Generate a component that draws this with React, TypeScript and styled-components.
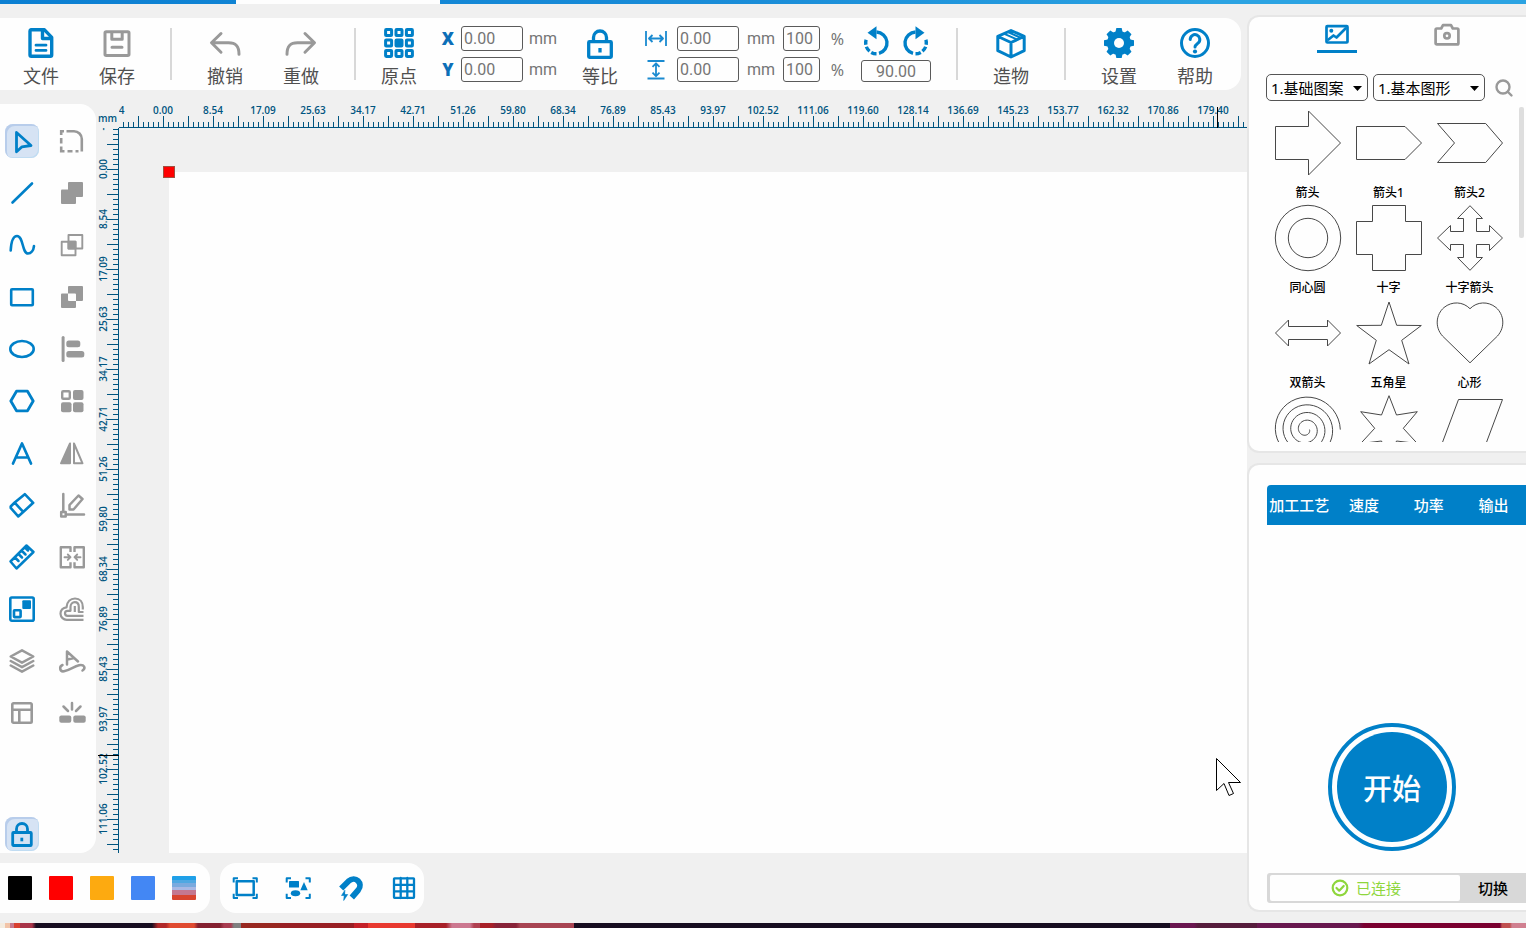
import React, { useEffect, useState } from "react";
import styled, { createGlobalStyle } from "styled-components";

const blue = "#0080c8";
const gray = "#999999";
const rulerBlue = "#005580";
const cjk = `"Noto Sans", "Noto Sans CJK SC", sans-serif`;
const numeric = `Roboto, "Noto Sans CJK SC", sans-serif`;

const GlobalStyle = createGlobalStyle`
  *, *::before, *::after { box-sizing: border-box; }
  body { margin: 0; background: #f0f0f0; font-family: ${cjk}; }
  button, input, select { font-family: inherit; margin: 0; }
  button { border: 0; padding: 0; background: none; cursor: pointer; }
  svg { display: block; flex: none; }
`;

/* ---------- page frame ---------- */

const Page = styled.div`
  display: flex;
  flex-direction: column;
  height: 100vh;
  min-height: 760px;
  overflow: hidden;
  background: #f0f0f0;
`;

const TitleStrip = styled.div`
  flex: none;
  height: 4px;
  background:
    linear-gradient(#fefefe, #fefefe) 236px 0 / 204px 4px no-repeat,
    linear-gradient(90deg, #0b7fd2, #1a8dd8 50%, #2ba3e2 80%);
`;

const DesktopStrip = styled.div`
  flex: none;
  height: 5px;
  background: linear-gradient(
    90deg,
    #f4ece0 0 5px, #f2c4a8 5px 10px, #c8788c 10px 14px, #d84030 14px 20px, #a83448 20px 32px,
    #170d20 36px 152px, #b02828 158px 166px, #e04a30 170px 194px, #842030 198px 220px,
    #a83c50 224px 231px, #808080 234px 241px, #982820 241px 280px, #981f24 280px 354px,
    #c42028 354px 368px, #e8382f 368px 415px, #a82028 415px 446px, #cc7890 452px 470px,
    #b04050 474px 480px, #a82028 480px 492px, #882338 496px 516px, #a84452 520px 574px,
    #170d20 574px 1170px, #6a1650 1170px 1194px, #561c3c 1198px 1257px, #68184f 1257px 1358px,
    #7a0030 1364px 1500px, #c05050 1502px 1510px, #d08090 1512px
  );
`;

const Main = styled.main`
  display: flex;
  flex: 1;
  min-height: 0;
`;

const LeftColumn = styled.div`
  display: flex;
  flex-direction: column;
  flex: 1;
  min-width: 0;
  padding: 14px 0 10px;
`;

const RightColumn = styled.aside`
  display: flex;
  flex-direction: column;
  flex: none;
  gap: 10px;
  width: 279px;
  padding: 11px 0;
`;

/* ---------- top toolbar ---------- */

const Toolbar = styled.header`
  display: flex;
  flex: none;
  align-items: flex-start;
  height: 72px;
  margin-right: 6px;
  padding: 0 8px 0 3px;
  background: #fefefe;
  border-radius: 0 16px 16px 0;
`;

const ToolButton = styled.button<{ $narrow?: boolean }>`
  display: flex;
  flex: none;
  flex-direction: column;
  align-items: center;
  gap: 4px;
  width: ${(p) => (p.$narrow ? 56 : 76)}px;
  padding-top: 9px;
  color: #505050;
  font-size: 18px;
  line-height: 26px;
`;

const Divider = styled.div`
  flex: none;
  width: 2px;
  height: 52px;
  margin: 10px 15px;
  background: #d8d8d8;
`;

const TransformGroup = styled.div`
  display: flex;
  flex: none;
  gap: 14px;
  margin-right: 10px;
`;

const PositionGrid = styled.div`
  display: grid;
  grid-template-columns: 14px 62px 29px;
  gap: 6px;
  align-items: center;
  align-self: flex-start;
  margin-top: 8px;
`;

const SizeGrid = styled(PositionGrid)`
  grid-template-columns: 27px 62px 28px 37px 19px;
  column-gap: 8px;
`;

const AxisLabel = styled.label`
  color: #0d6fb8;
  font-family: "Open Sans", sans-serif;
  font-size: 17px;
  font-weight: 800;
  line-height: 24px;
  text-align: center;
`;

const IconLabel = styled.label`
  display: flex;
  justify-content: center;
`;

const Unit = styled.span`
  color: #757575;
  font-family: ${numeric};
  font-size: 16px;
  line-height: 24px;
`;

const Percent = styled(Unit)`
  font-family: ${cjk};
  text-align: center;
`;

const NumberBox = styled.input<{ $center?: boolean }>`
  width: 100%;
  height: ${(p) => (p.$center ? 22 : 25)}px;
  padding: 0 2px;
  border: 1px solid #5a5a5a;
  border-radius: 3px;
  background: #fefefe;
  color: #757575;
  font-family: ${numeric};
  font-size: 16px;
  text-align: ${(p) => (p.$center ? "center" : "left")};
`;

const RotateBlock = styled.div`
  display: grid;
  grid-template-columns: 32px 32px;
  align-self: flex-start;
  justify-content: space-between;
  row-gap: 2px;
  width: 70px;
  margin-top: 8px;
`;

const RotateField = styled.label`
  display: flex;
  grid-column: 1 / -1;
`;

/* ---------- left tool palette ---------- */

const Workspace = styled.div`
  display: flex;
  flex: 1;
  min-height: 0;
  margin: 14px 0 10px;
`;

const Sidebar = styled.nav`
  display: flex;
  flex: none;
  flex-direction: column;
  justify-content: space-between;
  width: 96px;
  padding: 20px 5px 2px;
  background: #fefefe;
  border-radius: 0 16px 16px 0;
`;

const ToolGrid = styled.div`
  display: grid;
  grid-template-columns: 34px 34px;
  gap: 18px 16px;
`;

const SideButton = styled.button<{ $active?: boolean }>`
  width: 34px;
  height: 34px;
  border-radius: 8px;
  background: ${(p) => (p.$active ? "#d6e3f4" : "none")};
  box-shadow: ${(p) =>
    p.$active ? "inset 2px 2px 0 #b8cdeb, inset -1px -1px 0 #c0dcf2" : "none"};
`;

/* ---------- canvas ---------- */

const Board = styled.section`
  display: grid;
  flex: 1;
  grid-template-columns: 23px minmax(0, 1fr);
  grid-template-rows: 24px minmax(0, 1fr);
  min-width: 0;
`;

const RulerUnit = styled.span`
  padding: 6px 0 0 2px;
  color: ${rulerBlue};
  font-family: "Open Sans", sans-serif;
  font-size: 10px;
  font-weight: 600;
  line-height: 16px;
`;

const RulerSvg = styled.svg`
  width: 100%;
  height: 100%;
  overflow: hidden;
  text {
    fill: ${rulerBlue};
    font-family: "Open Sans", sans-serif;
    font-size: 10px;
    font-weight: 600;
    text-anchor: middle;
  }
`;

const Canvas = styled.div`
  position: relative;
  overflow: hidden;
  padding: 44px 0 0 50px;
`;

const Sheet = styled.div`
  height: 100%;
  background: #fefefe;
`;

const OriginMark = styled.div`
  position: absolute;
  left: 44px;
  top: 38px;
  width: 12px;
  height: 12px;
  border: 1px solid #a05040;
  background: #ff0000;
`;

const Pointer = styled.svg`
  position: absolute;
  left: 1096px;
  top: 629px;
`;

/* ---------- bottom bars ---------- */

const BottomBars = styled.footer`
  display: flex;
  flex: none;
  gap: 10px;
  height: 50px;
`;

const Swatches = styled.div`
  display: flex;
  align-items: center;
  gap: 17px;
  padding: 0 14px 0 8px;
  background: #fefefe;
  border-radius: 0 16px 16px 0;
`;

const Swatch = styled.button<{ $fill: string }>`
  width: 24px;
  height: 24px;
  border-radius: 1px;
  background: ${(p) => p.$fill};
`;

const ViewTools = styled.div`
  display: flex;
  align-items: center;
  gap: 25px;
  padding: 0 6px 0 11px;
  background: #fefefe;
  border-radius: 16px;
`;

/* ---------- right panels ---------- */

const Panel = styled.section<{ $grow?: boolean }>`
  display: flex;
  flex: ${(p) => (p.$grow ? "1" : "none")};
  flex-direction: column;
  min-height: 0;
  border: 2px solid #e6e6e6;
  border-right: 0;
  border-radius: 12px 0 0 12px;
  background: #fefefe;
  padding-left: 18px;
`;

const Tabs = styled.div`
  display: flex;
  padding-left: 15px;
`;

const Tab = styled.button<{ $active?: boolean }>`
  display: flex;
  flex-direction: column;
  align-items: center;
  width: 110px;
  height: 36px;
  padding-top: 3px;
  &::after {
    content: "";
    width: 40px;
    height: 3px;
    margin-top: 2px;
    background: ${(p) => (p.$active ? blue : "transparent")};
  }
`;

const Filters = styled.div`
  display: flex;
  align-items: center;
  gap: 5px;
  margin: 21px 0 6px -1px;
`;

const SelectWrap = styled.div<{ $wide?: boolean }>`
  display: flex;
  position: relative;
  width: ${(p) => (p.$wide ? 112 : 102)}px;
  svg {
    position: absolute;
    right: 6px;
    top: 12px;
    pointer-events: none;
  }
`;

const Select = styled.select`
  width: 100%;
  height: 27px;
  padding: 0 18px 0 4px;
  border: 1px solid #555;
  border-radius: 5px;
  appearance: none;
  background: #fefefe;
  color: #000;
  font-size: 15px;
  line-height: 24px;
`;

const SearchButton = styled.button`
  margin-left: 4px;
`;

const ShapeScroller = styled.div`
  display: flex;
  align-items: flex-start;
  justify-content: space-between;
  height: 335px;
  margin-bottom: 9px;
  padding-right: 2px;
  overflow: hidden;
`;

const ShapeGrid = styled.div`
  display: grid;
  grid-template-columns: repeat(3, 81px);
`;

const ShapeCell = styled.button`
  display: flex;
  flex-direction: column;
  align-items: center;
  gap: 7px;
  height: 95px;
  padding-top: 2px;
  color: #000;
  font-size: 12px;
  font-weight: 500;
  line-height: 18px;
`;

const ScrollThumb = styled.div`
  width: 5px;
  height: 131px;
  border-radius: 2px;
  background: #dedede;
`;

const ParamTable = styled.table`
  width: 100%;
  margin-top: 20px;
  border-collapse: collapse;
  table-layout: fixed;
  th {
    height: 40px;
    padding: 0;
    background: ${blue};
    color: #fefefe;
    font-size: 15px;
    font-weight: 500;
    line-height: 24px;
    white-space: nowrap;
  }
  th:first-child {
    border-top-left-radius: 4px;
  }
`;

const StartArea = styled.div`
  display: flex;
  flex: 1;
  align-items: flex-end;
  justify-content: center;
  padding: 0 9px 22px 0;
`;

const StartButton = styled.button`
  width: 128px;
  height: 128px;
  padding: 5px;
  border: 4px solid ${blue};
  border-radius: 50%;
  background: ${blue} content-box;
  color: #fefefe;
  font-size: 29px;
  font-weight: 500;
`;

const StatusBar = styled.div`
  display: flex;
  flex: none;
  height: 30px;
  margin-bottom: 7px;
  padding: 2px 0 2px 3px;
  border-radius: 3px 0 0 3px;
  background: #d8d8d8;
`;

const Status = styled.div`
  display: flex;
  align-items: center;
  justify-content: center;
  gap: 7px;
  flex: none;
  width: 190px;
  padding-left: 2px;
  border-radius: 2px;
  background: #fefefe;
  color: #8ed63c;
  font-size: 15px;
  line-height: 24px;
`;

const SwitchButton = styled.button`
  flex: 1;
  color: #000;
  font-size: 15px;
  font-weight: 500;
  line-height: 24px;
`;

/* ---------- drawings ---------- */

type IconProps = { size?: number; color?: string; w?: number; children: React.ReactNode };

const Icon = ({ size = 32, color = blue, w = 3, children }: IconProps) => (
  <svg
    width={size}
    height={size}
    viewBox={`0 0 ${size} ${size}`}
    fill="none"
    stroke={color}
    strokeWidth={w}
    strokeLinecap="round"
    strokeLinejoin="round"
    aria-hidden="true"
  >
    {children}
  </svg>
);

const FileIcon = () => (
  <Icon w={3.4}>
    <path d="M6 2.8h13.5l7.2 7.6V28a1.3 1.3 0 0 1-1.3 1.3H6.3A1.3 1.3 0 0 1 5 28V4a1.2 1.2 0 0 1 1-1.2z" />
    <path d="M17.500 4v7.500h8" />
    <path d="M11 18.2h10M11 23.4h10" strokeWidth="2.8" />
  </Icon>
);

const SaveIcon = () => (
  <Icon color={gray}>
    <rect x="4" y="4.8" width="24" height="23.6" rx="1.2" />
    <path d="M10.8 5.5v6.700h10.400V5.500M11 20.200h10" />
  </Icon>
);

const UndoIcon = () => (
  <Icon color={gray}>
    <path d="M12 6.500L2.500 15.800l9.500 9.400M3 15.800h16.500c8 0 10.500 4 10.500 11.500" />
  </Icon>
);

const RedoIcon = () => (
  <Icon color={gray}>
    <path d="M20 6.500l9.500 9.300-9.500 9.400M29 15.800H12.500c-8 0-10.500 4-10.500 11.500" />
  </Icon>
);

const OriginIcon = () => (
  <Icon w={3}>
    {[0, 1, 2].map((r) =>
      [0, 1, 2].map((c) => (
        <rect
          key={`${r}${c}`}
          x={2.6 + c * 10.4}
          y={2.6 + r * 10.4}
          width="6"
          height="6"
          rx="0.6"
          fill={r === 1 && c === 1 ? blue : "none"}
        />
      ))
    )}
  </Icon>
);

const LockIcon = () => (
  <Icon w={3.3}>
    <path d="M9.500 14v-3.500a6.500 6.500 0 0 1 13 0V14" />
    <rect x="4.700" y="14.600" width="22.600" height="15.700" rx="0.800" />
    <path d="M16 21v4.500" strokeLinecap="butt" />
  </Icon>
);

const WidthIcon = () => (
  <Icon size={24} color="#1a8ad0" w={1.8}>
    <path d="M2 4v15M22 4v15M5.500 11.500h13M8.500 8l-3.500 3.500 3.500 3.500M15.500 8l3.500 3.500-3.500 3.500" strokeLinecap="butt" />
  </Icon>
);

const HeightIcon = () => (
  <Icon size={24} color="#1a8ad0" w={1.8}>
    <path d="M3.500 3h17M3.500 20.500h17M12 5.500v12.500M8.500 8.800L12 5.300l3.500 3.500M8.500 14.700l3.500 3.500 3.500-3.500" strokeLinecap="butt" />
  </Icon>
);

const RotateArt = () => (
  <>
    <path d="M15.500 6a10.900 10.900 0 0 1 2.500 21.400" strokeLinecap="butt" />
    <path d="M15.500 27.800a10.900 10.900 0 0 1-10.400-14" strokeLinecap="butt" strokeDasharray="5.500 2" />
    <path d="M6.500 6.800L15.500 .3v13z" fill={blue} stroke="none" />
  </>
);

const RotateLeftIcon = () => (
  <Icon w={3.4}>
    <RotateArt />
  </Icon>
);

const RotateRightIcon = () => (
  <Icon w={3.4}>
    <g transform="translate(32 0) scale(-1 1)">
      <RotateArt />
    </g>
  </Icon>
);

const BoxIcon = () => (
  <Icon w={3}>
    <path d="M16 3.500l13.200 5.800v14.400L16 30 2.800 23.700V9.300zM3 9.500l13 6 13-6M16 15.500V29.500" />
    <path d="M9.400 6.800l13 5.800M13 5l13 6" strokeWidth="2" />
  </Icon>
);

const GearIcon = () => (
  <Icon>
    <g fill={blue} stroke="none">
      {[0, 45, 90, 135].map((a) => (
        <path key={a} d="M12.300 6l1-5h5.400l1 5v20l-1 5h-5.400l-1-5z" transform={`rotate(${a} 16 16)`} />
      ))}
      <circle cx="16" cy="16" r="12" />
      <circle cx="16" cy="16" r="5" fill="#fefefe" />
    </g>
  </Icon>
);

const HelpIcon = () => (
  <Icon w={3}>
    <circle cx="16" cy="16" r="13.500" />
    <path d="M11.200 12.500a4.800 4.800 0 1 1 7.800 3.700c-1.800 1.400-3 2-3 3.900" />
    <circle cx="16" cy="24.500" r="2.100" fill={blue} stroke="none" />
  </Icon>
);

const sideTools: { name: string; art: React.ReactNode; color: string; w?: number; active?: boolean }[] = [
  { name: "选择", color: blue, w: 2.8, active: true, art: <path d="M11.500 8.500l14.500 13-9 1.300-5.500 5z" /> },
  {
    name: "圆角", color: gray, w: 2.6,
    art: (
      <path
        d="M11.500 7.200h7.500a7.800 7.800 0 0 1 7.800 7.800v12.500M5 7.200h4M6.200 6v5M6.200 14v5.500M6.200 22.500v6M5 27.300h4.500M12.500 27.300h5M20.500 27.300h3"
        strokeLinecap="butt"
      />
    ),
  },
  { name: "直线", color: blue, w: 2.6, art: <path d="M7.500 26.500L27 7.500" /> },
  {
    name: "合并", color: gray,
    art: (
      <g fill={gray} stroke="none">
        <rect x="13" y="6" width="15" height="15" rx="1" />
        <rect x="6" y="13.500" width="15" height="14.500" rx="1" />
      </g>
    ),
  },
  { name: "曲线", color: blue, w: 2.6, art: <path d="M5.700 22.500C6.300 12 8.500 8 12 8c6.500 0 5 17.500 11 17.500 3 0 5.500-3 6-7.500" /> },
  {
    name: "相交", color: gray, w: 1.9,
    art: (
      <>
        <rect x="13.500" y="7" width="13.800" height="13.500" />
        <rect x="6.700" y="13.700" width="13.800" height="13.500" />
        <rect x="13.500" y="13.700" width="7" height="6.800" fill={gray} />
      </>
    ),
  },
  { name: "矩形", color: blue, w: 2.6, art: <rect x="6.200" y="9.200" width="21.600" height="16" rx="0.800" /> },
  {
    name: "排除", color: gray,
    art: (
      <g stroke="none">
        <path fill={gray} fillRule="evenodd" d="M13 7a1 1 0 0 1 1-1h13a1 1 0 0 1 1 1v13a1 1 0 0 1-1 1h-6v6a1 1 0 0 1-1 1H7a1 1 0 0 1-1-1V14.500a1 1 0 0 1 1-1h6zM13 13.500V20a1 1 0 0 0 1 1h7v-6.500a1 1 0 0 0-1-1z" />
      </g>
    ),
  },
  { name: "椭圆", color: blue, w: 2.6, art: <ellipse cx="17" cy="17" rx="11.700" ry="8" /> },
  {
    name: "对齐", color: gray,
    art: (
      <g fill={gray} stroke="none">
        <rect x="6.600" y="4" width="3" height="26" rx="1.500" />
        <rect x="11.300" y="8.500" width="14" height="6.800" rx="2.500" />
        <rect x="11.300" y="19" width="18" height="6.500" rx="2.500" />
      </g>
    ),
  },
  { name: "多边形", color: blue, w: 2.8, art: <path d="M5.800 17l5.700-9.800h11l5.700 9.800-5.700 9.800h-11z" /> },
  {
    name: "阵列", color: gray,
    art: (
      <>
        <rect x="7.200" y="7.200" width="7.600" height="7.600" rx="1" strokeWidth="2.400" />
        <g fill={gray} stroke="none">
          <rect x="18" y="6" width="10.500" height="10" rx="2" />
          <rect x="6" y="18.300" width="10.500" height="10" rx="2" />
          <rect x="18" y="18.300" width="10.500" height="10" rx="2" />
        </g>
      </>
    ),
  },
  { name: "文字", color: blue, w: 2.7, art: <path d="M8 27.500L17 7.500l9 20M11.500 21.500h11" /> },
  {
    name: "镜像", color: gray, w: 2,
    art: (
      <>
        <path d="M15 7.500v19.800H6z" fill={gray} />
        <path d="M19 7.500v19.800h8.500z" />
      </>
    ),
  },
  { name: "橡皮擦", color: blue, w: 2.6, art: <path d="M19.800 6.200l8.400 8.600-10 9.200-5 4.400-7.500-8.500V18.500l4-4zM9.700 14.700l8.300 9" /> },
  {
    name: "节点编辑", color: gray, w: 2.5,
    art: (
      <>
        <path d="M8.300 6v17.500M11.500 26.500H29" />
        <rect x="6.200" y="24" width="4.500" height="4.500" />
        <path d="M14.500 21.500v-4.500L23.500 7.500l4 3.500-9 10.500z" />
      </>
    ),
  },
  {
    name: "测量", color: blue, w: 2.5,
    art: <path d="M21.500 5.500l7 6.500-17 16.500-6-7zM10 17.500l3.500 3.500M13.500 14l3.500 3.500M17 11l3.500 3.500M20.500 8l2.500 2.500" />,
  },
  {
    name: "收缩", color: gray, w: 2.4,
    art: (
      <>
        <path d="M15.500 12V7.200H5.800v20h9.700v-5M19.500 12V7.200h9.300v20h-9.300v-5" strokeLinecap="butt" />
        <path d="M9.500 17.200h5.500M12.800 14.500l2.700 2.700-2.700 2.700M25.500 17.200H20M22.200 14.500l-2.700 2.700 2.700 2.700" strokeWidth="1.900" />
      </>
    ),
  },
  {
    name: "排版", color: blue, w: 2.6,
    art: (
      <>
        <rect x="5.300" y="5.500" width="23.400" height="23.200" rx="1.500" />
        <rect x="17.300" y="8.300" width="8.700" height="8.700" rx="1" fill={blue} stroke="none" />
        <rect x="9" y="18.300" width="6.600" height="6.800" rx="0.500" />
      </>
    ),
  },
  {
    name: "偏移", color: gray, w: 2.2,
    art: (
      <path
        d="M28.500 27.800H12a6 6 0 0 1-.5-12.500c.5-5.500 4-8.800 8.500-8.800 5 0 7.800 3.500 7.800 8.500v2.500M28.500 23.800H12.500a2.500 2.500 0 0 1 0-5h3V15c0-3 2-4.800 4.300-4.800s4 1.800 4 4.800v5h4.700M19.800 14v6"
        strokeLinecap="butt"
      />
    ),
  },
  {
    name: "图层", color: gray, w: 2.5,
    art: <path d="M17 6.300l11.300 6.200L17 18.700 5.700 12.500zM5.700 17L17 23.200 28.300 17M5.700 21.500L17 27.700l11.300-6.200" />,
  },
  {
    name: "路径文字", color: gray, w: 2.5,
    art: <path d="M12 20.500V7.500L23 17.500M12.500 15.500l6.500-1.500M7.500 21c-3.500 1.500-3 7 1.500 6.300 6-1.300 10-5 15-6 5.500-1 7 3 3.500 5.200" />,
  },
  {
    name: "布局", color: gray, w: 2.6,
    art: <path d="M8.500 7.300h17a1.200 1.200 0 0 1 1.200 1.200v17a1.200 1.200 0 0 1-1.200 1.200h-17a1.200 1.200 0 0 1-1.200-1.200v-17a1.200 1.200 0 0 1 1.200-1.200zM7.300 13.700h19.400M14.300 13.700v13" />,
  },
  {
    name: "打散", color: gray, w: 2.5,
    art: (
      <>
        <path d="M17 7v6.500M8.500 10.500l4.500 4.500M25.500 10.500L21 15" />
        <g fill={gray} stroke="none">
          <rect x="4.300" y="19.500" width="12" height="7.200" rx="2" />
          <rect x="18.300" y="19.500" width="12.400" height="7.200" rx="2" />
        </g>
      </>
    ),
  },
];

const Brackets = () => (
  <path
    d="M2.700 8.500V4.200H7M21.500 4.200h4.300v4.300M25.800 19.800v4.300h-4.300M7 24.100H2.700v-4.300"
    strokeWidth="2"
    strokeLinecap="butt"
  />
);

const viewTools: { name: string; art: React.ReactNode }[] = [
  {
    name: "全幅",
    art: (
      <>
        <Brackets />
        <rect x="5.700" y="7.300" width="17" height="13.800" strokeWidth="2.500" />
      </>
    ),
  },
  {
    name: "适应图形",
    art: (
      <>
        <Brackets />
        <g fill={blue} stroke="none">
          <rect x="5" y="7" width="10" height="6.500" rx="0.500" />
          <path d="M20 8l3.700 8.300h-7.400z" />
          <ellipse cx="11.500" cy="19.300" rx="4.700" ry="3" />
        </g>
      </>
    ),
  },
  {
    name: "吸附",
    art: (
      <>
        <path d="M4.200 14.500L11.500 7.200c7-6.300 15 2.500 9.800 8.800L14.800 23.500" strokeWidth="5.800" strokeLinecap="butt" />
        <path d="M7.700 16.500L4.500 21.500h2.700L6.700 26.500l4-6H8z" fill={blue} strokeWidth="0.600" />
      </>
    ),
  },
  {
    name: "网格",
    art: (
      <path
        d="M4.500 4.300h19a.5.5 0 0 1 .5.500v18.500a.5.5 0 0 1-.5.500h-19a.5.5 0 0 1-.5-.500V4.800a.5.5 0 0 1 .5-.5zM10.700 4v20M17.300 4v20M4 10.800h20M4 17.300h20"
        strokeWidth="2.300"
      />
    ),
  },
];

const poly = (points: string) => <polygon points={points} />;

const spiralPoints = Array.from({ length: 161 }, (_, i) => {
  const turn = i / 40;
  const r = 34.4 - 7.7 * turn;
  const a = -turn * 2 * Math.PI;
  return `${(31.9 + r * Math.cos(a)).toFixed(2)},${(35.6 + r * Math.sin(a)).toFixed(2)}`;
}).join(" ");

const shapes: { name: string; art: React.ReactNode }[] = [
  { name: "箭头", art: poly("1.5,17.5 34.5,17.5 34.5,2 66.5,34 34.5,66 34.5,50.5 1.5,50.5") },
  { name: "箭头1", art: poly("1.5,17.5 50,17.5 66.5,34 50,50.5 1.5,50.5") },
  { name: "箭头2", art: poly("1.5,14.5 49.7,14.5 66.5,34 49.7,53.5 1.5,53.5 18.5,34") },
  {
    name: "同心圆",
    art: (
      <>
        <circle cx="34" cy="34" r="32.7" />
        <circle cx="34" cy="34" r="19.7" />
      </>
    ),
  },
  { name: "十字", art: poly("17.5,1.5 50.5,1.5 50.5,17.5 66.5,17.5 66.5,50.5 50.5,50.5 50.5,66.5 17.5,66.5 17.5,50.5 1.5,50.5 1.5,17.5 17.5,17.5") },
  {
    name: "十字箭头",
    art: poly(
      "34,1.7 46.5,14.5 40.5,14.5 40.5,27.5 53.5,27.5 53.5,21.5 66.5,34 53.5,46.5 53.5,40.5 40.5,40.5 40.5,53.5 46.5,53.5 34,66.3 21.5,53.5 27.5,53.5 27.5,40.5 14.5,40.5 14.5,46.5 1.5,34 14.5,21.5 14.5,27.5 27.5,27.5 27.5,14.5 21.5,14.5"
    ),
  },
  { name: "双箭头", art: poly("1.5,34 14.5,21 14.5,27.5 53.5,27.5 53.5,21 66.5,34 53.5,47 53.5,40.5 14.5,40.5 14.5,47") },
  { name: "五角星", art: poly("34,3 41.7,26.3 66.3,26.5 46.7,41.3 54,65 34,50.7 14,65 21.3,41.3 1.7,26.5 26.3,26.3") },
  { name: "心形", art: <path d="M34 63.800L6.500 37C-1.500 28 0 15.500 8 8.500 16 2 27 2.500 34 9.700 41 2.500 52 2 60 8.500 68 15.500 69.500 28 61.500 37z" /> },
  { name: "螺旋", art: <polyline points={spiralPoints} /> },
  { name: "六角星", art: poly("34,1.7 41.5,21 62.3,17.7 48.3,34.3 62.3,49.5 41.5,47 34,66 26.5,47 5.7,49.5 19.7,34.3 5.7,17.7 26.5,21") },
  { name: "平行四边形", art: poly("22.5,5.5 66.5,5.5 45,63 1,63") },
];

/* ---------- rulers ---------- */

const unitStep = 8.54295;

const useWindowSize = () => {
  const [size, setSize] = useState({ w: window.innerWidth, h: window.innerHeight });
  useEffect(() => {
    const update = () => setSize({ w: window.innerWidth, h: window.innerHeight });
    window.addEventListener("resize", update);
    return () => window.removeEventListener("resize", update);
  }, []);
  return size;
};

const marks = (length: number) =>
  Array.from({ length: Math.max(0, Math.ceil(length / 50)) + 1 }, (_, i) => i - 1);

const HorizontalRuler = ({ length }: { length: number }) => (
  <RulerSvg shapeRendering="crispEdges" aria-hidden="true">
    <defs>
      <pattern id="ticks-x" x="19" y="0" width="25" height="24" patternUnits="userSpaceOnUse">
        <rect x="0" y="12" width="1" height="12" fill={rulerBlue} />
        {[5, 10, 15, 20].map((x) => (
          <rect key={x} x={x} y="18" width="1" height="6" fill={rulerBlue} />
        ))}
      </pattern>
    </defs>
    <rect width="100%" height="24" fill="url(#ticks-x)" />
    <rect y="23" width="100%" height="1" fill={rulerBlue} />
    {marks(length).map((n) => (
      <text key={n} x={44 + n * 50} y="10">
        {(n * unitStep).toFixed(2)}
      </text>
    ))}
    <rect x="1098" y="3" width="1" height="21" fill="#000" />
  </RulerSvg>
);

const VerticalRuler = ({ length }: { length: number }) => (
  <RulerSvg shapeRendering="crispEdges" aria-hidden="true">
    <defs>
      <pattern id="ticks-y" x="0" y="16" width="23" height="25" patternUnits="userSpaceOnUse">
        <rect x="11" y="0" width="12" height="1" fill={rulerBlue} />
        {[5, 10, 15, 20].map((y) => (
          <rect key={y} x="17" y={y} width="6" height="1" fill={rulerBlue} />
        ))}
      </pattern>
    </defs>
    <rect width="23" height="100%" fill="url(#ticks-y)" />
    <rect x="22" width="1" height="100%" fill={rulerBlue} />
    {marks(length).map((n) => (
      <text key={n} transform={`translate(11 ${41 + n * 50}) rotate(-90)`}>
        {(n * unitStep).toFixed(2)}
      </text>
    ))}
    <rect x="2" y="627" width="21" height="1" fill="#000" />
  </RulerSvg>
);

/* ---------- sections ---------- */

const TopToolbar = () => (
  <Toolbar>
    <ToolButton><FileIcon />文件</ToolButton>
    <ToolButton><SaveIcon />保存</ToolButton>
    <Divider />
    <ToolButton><UndoIcon />撤销</ToolButton>
    <ToolButton><RedoIcon />重做</ToolButton>
    <Divider />
    <TransformGroup>
      <ToolButton $narrow><OriginIcon />原点</ToolButton>
      <PositionGrid>
        <AxisLabel htmlFor="pos-x">X</AxisLabel>
        <NumberBox id="pos-x" defaultValue="0.00" />
        <Unit>mm</Unit>
        <AxisLabel htmlFor="pos-y">Y</AxisLabel>
        <NumberBox id="pos-y" defaultValue="0.00" />
        <Unit>mm</Unit>
      </PositionGrid>
      <ToolButton $narrow><LockIcon />等比</ToolButton>
      <SizeGrid>
        <IconLabel htmlFor="size-w" aria-label="宽度"><WidthIcon /></IconLabel>
        <NumberBox id="size-w" defaultValue="0.00" />
        <Unit>mm</Unit>
        <NumberBox aria-label="宽度百分比" defaultValue="100" />
        <Percent>%</Percent>
        <IconLabel htmlFor="size-h" aria-label="高度"><HeightIcon /></IconLabel>
        <NumberBox id="size-h" defaultValue="0.00" />
        <Unit>mm</Unit>
        <NumberBox aria-label="高度百分比" defaultValue="100" />
        <Percent>%</Percent>
      </SizeGrid>
      <RotateBlock>
        <button aria-label="逆时针旋转"><RotateLeftIcon /></button>
        <button aria-label="顺时针旋转"><RotateRightIcon /></button>
        <RotateField><NumberBox $center aria-label="旋转角度" defaultValue="90.00" /></RotateField>
      </RotateBlock>
    </TransformGroup>
    <Divider />
    <ToolButton><BoxIcon />造物</ToolButton>
    <Divider />
    <ToolButton><GearIcon />设置</ToolButton>
    <ToolButton><HelpIcon />帮助</ToolButton>
  </Toolbar>
);

const ToolPalette = () => (
  <Sidebar>
    <ToolGrid>
      {sideTools.map((t) => (
        <SideButton key={t.name} aria-label={t.name} $active={t.active}>
          <Icon size={34} color={t.color} w={t.w}>{t.art}</Icon>
        </SideButton>
      ))}
    </ToolGrid>
    <SideButton $active aria-label="锁定">
      <Icon size={34} w={2.8}>
        <path d="M11.500 15v-3a5.500 5.500 0 0 1 11 0v3" />
        <rect x="7.700" y="15.500" width="18.600" height="13" rx="0.800" />
        <path d="M16.800 20.700v3.600" strokeLinecap="butt" />
      </Icon>
    </SideButton>
  </Sidebar>
);

const Caret = () => (
  <svg width="9" height="5" viewBox="0 0 9 5" aria-hidden="true">
    <path d="M0 0h9L4.500 5z" fill="#000" />
  </svg>
);

const LibraryPanel = () => (
  <Panel>
    <Tabs>
      <Tab $active aria-label="图库">
        <Icon size={28} w={2.7}>
          <rect x="3.500" y="6.200" width="21" height="16.300" rx="0.800" />
          <path d="M5.500 19.500L10.500 15.500l3 2L22.500 8.500" />
          <circle cx="8.300" cy="10.800" r="2" fill={blue} stroke="none" />
        </Icon>
      </Tab>
      <Tab aria-label="相机">
        <Icon size={28} w={2.7} color={gray}>
          <path d="M3.800 8.500h4.400l1.800-3.300h8l1.800 3.300h4.400a1.200 1.200 0 0 1 1.200 1.200v13.500a1.200 1.200 0 0 1-1.200 1.200H3.800a1.200 1.200 0 0 1-1.200-1.200V9.700a1.200 1.200 0 0 1 1.200-1.200z" />
          <circle cx="14" cy="15.800" r="2.700" />
        </Icon>
      </Tab>
    </Tabs>
    <Filters>
      <SelectWrap>
        <Select aria-label="图案分类"><option>1.基础图案</option></Select>
        <Caret />
      </SelectWrap>
      <SelectWrap $wide>
        <Select aria-label="图形分类"><option>1.基本图形</option></Select>
        <Caret />
      </SelectWrap>
      <SearchButton aria-label="搜索">
        <Icon size={20} w={2.4} color={gray}>
          <circle cx="9" cy="9" r="6.500" />
          <path d="M14 14l3.500 3.500" />
        </Icon>
      </SearchButton>
    </Filters>
    <ShapeScroller>
      <ShapeGrid>
        {shapes.map((s) => (
          <ShapeCell key={s.name}>
            <svg width="68" height="68" viewBox="0 0 68 68" fill="none" stroke="#484848" strokeWidth="1" aria-hidden="true">
              {s.art}
            </svg>
            {s.name}
          </ShapeCell>
        ))}
      </ShapeGrid>
      <ScrollThumb />
    </ShapeScroller>
  </Panel>
);

const JobPanel = () => (
  <Panel $grow>
    <ParamTable>
      <thead>
        <tr>
          <th scope="col">加工工艺</th>
          <th scope="col">速度</th>
          <th scope="col">功率</th>
          <th scope="col">输出</th>
        </tr>
      </thead>
    </ParamTable>
    <StartArea>
      <StartButton>开始</StartButton>
    </StartArea>
    <StatusBar>
      <Status>
        <Icon size={18} w={2.2} color="#8ed63c">
          <circle cx="9" cy="9" r="7.300" />
          <path d="M5.500 9l2.700 2.700L12.700 7" />
        </Icon>
        已连接
      </Status>
      <SwitchButton>切换</SwitchButton>
    </StatusBar>
  </Panel>
);

const swatches = [
  { name: "黑色", fill: "#000000" },
  { name: "红色", fill: "#ff0000" },
  { name: "橙色", fill: "#fdaa10" },
  { name: "蓝色", fill: "#4387f4" },
  {
    name: "图像",
    fill: "linear-gradient(#1fa0e8 0 4px, #4fa8e2 4px 7px, #7aaade 7px 11px, #a8b8e4 11px 14px, #c47890 14px 19px, #d8452f 19px)",
  },
];

export default function App() {
  const { w, h } = useWindowSize();
  return (
    <Page>
      <GlobalStyle />
      <TitleStrip />
      <Main>
        <LeftColumn>
          <TopToolbar />
          <Workspace>
            <ToolPalette />
            <Board>
              <RulerUnit>mm</RulerUnit>
              <HorizontalRuler length={w - 442} />
              <VerticalRuler length={h - 228} />
              <Canvas>
                <Sheet />
                <OriginMark />
                <Pointer width="28" height="42" viewBox="0 0 28 42" aria-hidden="true">
                  <path d="M1.500 1.500v32l7.500-7 5 12 4.500-2-5-11h12z" fill="#fefefe" stroke="#000" strokeWidth="1" />
                </Pointer>
              </Canvas>
            </Board>
          </Workspace>
          <BottomBars>
            <Swatches>
              {swatches.map((s) => (
                <Swatch key={s.name} aria-label={s.name} $fill={s.fill} />
              ))}
            </Swatches>
            <ViewTools>
              {viewTools.map((t) => (
                <button key={t.name} aria-label={t.name}>
                  <Icon size={28}>{t.art}</Icon>
                </button>
              ))}
            </ViewTools>
          </BottomBars>
        </LeftColumn>
        <RightColumn>
          <LibraryPanel />
          <JobPanel />
        </RightColumn>
      </Main>
      <DesktopStrip />
    </Page>
  );
}
